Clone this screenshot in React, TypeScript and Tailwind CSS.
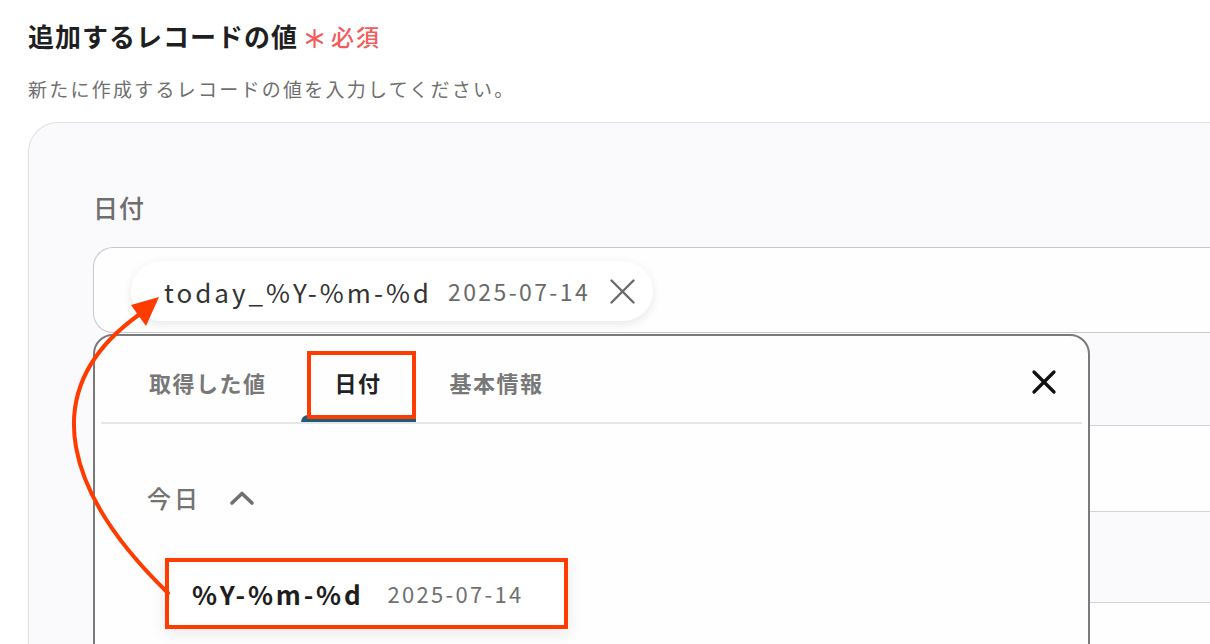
import { X } from 'lucide-react'

function Asterisk() {
  return (
    <svg width="19" height="19" viewBox="0 0 19 19" className="ml-[7px] mr-[7px] mt-[4px]">
      <g stroke="#f25c5c" strokeWidth="2.2" strokeLinecap="round">
        <line x1="9.5" y1="1" x2="9.5" y2="18" />
        <line x1="2" y1="5.2" x2="17" y2="13.8" />
        <line x1="2" y1="13.8" x2="17" y2="5.2" />
      </g>
    </svg>
  )
}

function ChevronUp() {
  return (
    <svg width="26" height="16" viewBox="0 0 26 16">
      <path d="M3 13 L13 3.5 L23 13" fill="none" stroke="#707070" strokeWidth="3.6" strokeLinecap="round" strokeLinejoin="round" />
    </svg>
  )
}

function ThinX({ size, color, width }: { size: number; color: string; width: number }) {
  return (
    <svg width={size} height={size} viewBox={`0 0 ${size} ${size}`}>
      <g stroke={color} strokeWidth={width} strokeLinecap="round">
        <line x1="1.5" y1="1.5" x2={size - 1.5} y2={size - 1.5} />
        <line x1={size - 1.5} y1="1.5" x2="1.5" y2={size - 1.5} />
      </g>
    </svg>
  )
}

const tabs = ['取得した値', '日付', '基本情報']

export default function App() {
  return (
    <div className="relative w-[1210px] h-[644px] overflow-hidden bg-white font-['Noto_Sans_CJK_JP','Noto_Sans',sans-serif]">
      <div className="pl-[28px] pt-[19px]">
        {/* Heading */}
        <div className="flex items-center">
          <h2 className="text-[26px] leading-[34px] font-bold tracking-[1px] text-[#1f1f1f]">追加するレコードの値</h2>
          <Asterisk />
          <span className="text-[23px] leading-[34px] font-medium tracking-[2px] text-[#f25c5c]">必須</span>
        </div>
        <p className="mt-[22px] text-[19px] leading-[28px] tracking-[2.25px] text-[#6f6f6f]">
          新たに作成するレコードの値を入力してください。
        </p>

        {/* Form container */}
        <div className="mt-[19px] h-[600px] rounded-tl-[30px] border-l-[1.5px] border-t-[1.5px] border-[#e1e0e5] bg-[#faf9fc] pl-[64px] pt-[67px]">
          <div className="text-[25px] leading-[34px] tracking-[1px] font-medium text-[#6e6e6e]">日付</div>

          <div className="relative mt-[23px]">
            <div className="flex h-[86px] items-center rounded-l-[20px] border-l-[1.5px] border-y-[1.5px] border-[#c9c8cd] bg-[#fefefe] pl-[37px]">
              <div className="mt-[2px] flex h-[60px] items-center rounded-full bg-white pl-[33px] pr-[18px] shadow-[0_3px_10px_rgba(40,30,60,0.10)]">
                <span className="text-[26px] tracking-[3px] text-[#333333]">today_%Y-%m-%d</span>
                <span className="ml-[16px] text-[23px] tracking-[2.4px] text-[#6a6a6a]">2025-07-14</span>
                <span className="ml-[20px] flex items-center">
                  <ThinX size={25} color="#6b6b6b" width={2.4} />
                </span>
              </div>
            </div>

            {/* Dropdown */}
            <div className="absolute left-0 top-full z-10 mt-[1px] h-[400px] w-[997px] rounded-t-[20px] border-[2px] border-[#7a7a7a] bg-[#fefefe]">
              <div className="flex h-[86px] items-stretch pl-[20px] pr-[30px]">
                {tabs.map((t) => {
                  const active = t === '日付'
                  return (
                    <div key={t} className="relative flex items-center px-[34px] pt-[6px]">
                      <span
                        className={`text-[22px] font-bold tracking-[1.5px] ${
                          active ? 'text-[#222222]' : 'text-[#787878]'
                        }`}
                      >
                        {t}
                      </span>
                      {active && (
                        <>
                          <div className="absolute bottom-0 left-0 right-0 h-[7px] rounded-tl-[8px] bg-[#1b5d7b]" />
                          <div className="absolute left-[6px] right-0 top-[15px] bottom-[3px] border-[4px] border-[#ff3c00]" />
                        </>
                      )}
                    </div>
                  )
                })}
                <div className="flex-1" />
                <div className="flex items-center pt-[6px]">
                  <X size={40} strokeWidth={2} color="#111111" className="-mr-[6px]" />
                </div>
              </div>
              <div className="mx-[6px] h-[2px] bg-[#e6e6e8]" />

              {/* Today group */}
              <div className="mt-[57px] flex items-center pl-[52px]">
                <span className="text-[24px] leading-[34px] tracking-[3px] font-medium text-[#737373]">今日</span>
                <span className="ml-[28px] flex items-center">
                  <ChevronUp />
                </span>
              </div>

              <div className="mt-[43px] ml-[70px] w-[403px] border-[4px] border-[#ff3c00] bg-white shadow-[0_4px_14px_rgba(40,30,60,0.10)]">
                <div className="flex h-[63px] items-center pl-[23px]">
                  <span className="text-[26px] font-bold tracking-[2.8px] text-[#1e1e1e]">%Y-%m-%d</span>
                  <span className="ml-[24px] text-[22px] tracking-[2.3px] text-[#707070]">2025-07-14</span>
                </div>
              </div>
            </div>
          </div>

          {/* Fields behind the dropdown */}
          <div className="h-[92px]" />
          <div className="h-[87px] rounded-l-[20px] border-l-[1.5px] border-y-[1.5px] border-[#d3d2d8] bg-[#fefefe]" />
          <div className="h-[90px]" />
          <div className="h-[87px] rounded-l-[20px] border-l-[1.5px] border-y-[1.5px] border-[#d3d2d8] bg-[#fefefe]" />
        </div>
      </div>

      {/* Annotation arrow */}
      <svg className="pointer-events-none absolute left-0 top-0 z-20" width="1210" height="644">
        <path d="M168 593 C 70 498, 30 392, 140 314" fill="none" stroke="#ff3c00" strokeWidth="4" strokeLinecap="round" />
        <polygon points="159,297 131,305 146,326" fill="#ff3c00" />
      </svg>
    </div>
  )
}
